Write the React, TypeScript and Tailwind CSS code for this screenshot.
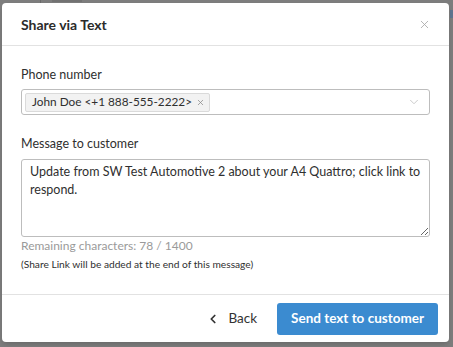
import { ChevronDown, ChevronLeft, X } from "lucide-react"

const App = () => {
  return (
    <div className="relative h-[347px] w-[453px] overflow-hidden bg-[#7d7d7d] font-['Lato',sans-serif] text-[#333]">
      {/* faded page behind the overlay */}
      <div className="absolute left-[40px] top-0 h-[10px] w-px bg-[#6a6a6a]" />
      <div className="absolute left-[52px] top-0 h-[2px] w-[30px] bg-[#727272]" />
      <div className="absolute right-0 top-[10px] h-[8px] w-[3px] bg-[#5f7590]" />

      <div className="relative mx-[2px] mt-[3px] flex h-[339px] w-[447px] flex-col rounded-[4px] bg-white shadow-md">
        <div className="flex h-[43px] items-center justify-between border-b border-[#e2e2e2] pl-[19px] pr-[18px]">
          <h2 className="text-[14px] font-bold text-[#2b2b2b]">Share via Text</h2>
          <X className="h-[13px] w-[13px] text-[#a5a5a5]" strokeWidth={1.5} />
        </div>

        <div className="flex flex-1 flex-col px-[19px] pt-[19px]">
          <label className="text-[12.5px] leading-[20px] text-[#2f2f2f]">Phone number</label>
          <div className="mt-[4px] flex h-[26px] items-center justify-between rounded-[3px] border border-[#bdbdbd] pl-[3px] pr-[8px]">
            <span className="flex h-[19px] items-center gap-[4px] rounded-[2px] border border-[#dadada] bg-[#f2f2f2] pl-[6px] pr-[4px] text-[11.8px] text-[#2f2f2f]">
              John Doe &lt;+1 888-555-2222&gt;
              <X className="h-[9px] w-[9px] text-[#8a8a8a]" strokeWidth={2} />
            </span>
            <ChevronDown className="h-[14px] w-[14px] text-[#c4c4c4]" strokeWidth={1.5} />
          </div>

          <label className="mt-[19px] text-[12.5px] leading-[20px] text-[#2f2f2f]">Message to customer</label>
          <textarea
            className="mt-[5px] h-[78px] resize-y rounded-[3px] border border-[#bdbdbd] px-[8px] py-[3px] text-[12.5px] leading-[18px] text-[#2f2f2f] outline-none"
            defaultValue="Update from SW Test Automotive 2 about your A4 Quattro; click link to respond."
          />
          <div className="text-[12px] leading-[18px] text-[#9a9a9a]">Remaining characters: 78 / 1400</div>
          <div className="mt-[2px] text-[10.2px] leading-[14px] text-[#2f2f2f]">(Share Link will be added at the end of this message)</div>
        </div>

        <div className="flex h-[48px] items-center justify-end gap-[20px] border-t border-[#e2e2e2] pr-[11px]">
          <button className="flex items-center gap-[8px] text-[13.5px] text-[#333]">
            <ChevronLeft className="h-[14px] w-[14px]" strokeWidth={3} />
            Back
          </button>
          <button className="h-[32px] rounded-[3px] bg-[#3b8bd0] px-[14px] text-[13.5px] font-bold text-white">
            Send text to customer
          </button>
        </div>
      </div>
    </div>
  )
}

export default App
